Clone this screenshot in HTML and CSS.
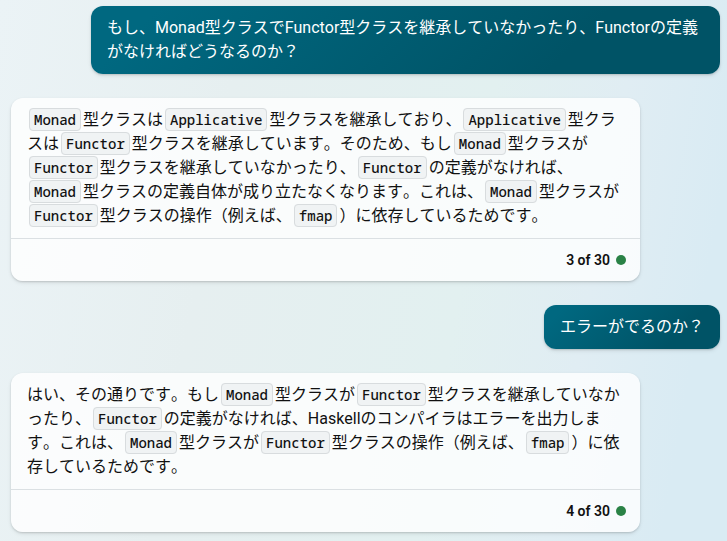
FILE: index.html
```html
<!DOCTYPE html>
<html lang="ja">
<head>
<meta charset="utf-8">
<title>チャット</title>
<link rel="stylesheet" href="styles.css">
</head>
<body>
<main class="chat">
<article class="message user"><p>もし、Monad型クラスでFunctor型クラスを継承していなかったり、Functorの定義がなければどうなるのか？</p></article>
<article class="message bot">
<p class="content"><code>Monad</code>型クラスは<code>Applicative</code>型クラスを継承しており、<code>Applicative</code>型クラスは<code>Functor</code>型クラスを継承しています。そのため、もし<code>Monad</code>型クラスが<code>Functor</code>型クラスを継承していなかったり、<code>Functor</code>の定義がなければ、<code>Monad</code>型クラスの定義自体が成り立たなくなります。これは、<code>Monad</code>型クラスが<code>Functor</code>型クラスの操作（例えば、<code>fmap</code>）に依存しているためです。</p>
<footer class="turns">3 of 30<span class="dot"></span></footer>
</article>
<article class="message user"><p>エラーがでるのか？</p></article>
<article class="message bot">
<p class="content">はい、その通りです。もし<code>Monad</code>型クラスが<code>Functor</code>型クラスを継承していなかったり、<code>Functor</code>の定義がなければ、Haskellのコンパイラはエラーを出力します。これは、<code>Monad</code>型クラスが<code>Functor</code>型クラスの操作（例えば、<code>fmap</code>）に依存しているためです。</p>
<footer class="turns">4 of 30<span class="dot"></span></footer>
</article>
</main>
</body>
</html>
```
FILE: styles.css
```css
* {
  box-sizing: border-box;
}

body {
  margin: 0;
  min-height: 100vh;
  background: linear-gradient(100deg, #ebf3f6 0%, #e6eff0 30%, #e2f0f0 62%, #e0edf3 78%, #d9ebf3 92%, #d9ebf3 100%);
  color: #111;
  font: 16px/24px Roboto, "Noto Sans CJK JP", sans-serif;
  font-kerning: none;
}

p {
  margin: 0;
}

.chat {
  display: flex;
  flex-direction: column;
  gap: 24px;
  padding: 6px 7px 8px 11px;
}

.message {
  max-width: 629px;
  border-radius: 12px;
  box-shadow: 0 1px 2px rgba(0, 0, 0, 0.14), 0 2px 4px rgba(0, 0, 0, 0.08);
}

.user {
  align-self: flex-end;
  padding: 10px 16px;
  background: linear-gradient(135deg, #006880 10%, #005366 75%);
  color: #fff;
}

.bot {
  align-self: flex-start;
  background: rgba(255, 255, 255, 0.8);
}

.content {
  padding: 10px 16px;
}

code {
  margin: 0 2px;
  padding: 1px 4px;
  border: 1px solid #d8dcde;
  border-radius: 4px;
  background: #f0f3f4;
  font: 500 14px/20px "Noto Sans Mono", "Noto Sans Mono CJK JP", "DejaVu Sans Mono", monospace;
}

.turns {
  display: flex;
  align-items: center;
  justify-content: flex-end;
  gap: 6px;
  padding: 9px 14px;
  border-top: 1px solid #dbe0e3;
  font-size: 14px;
  font-weight: 600;
}

.dot {
  width: 10px;
  height: 10px;
  border-radius: 50%;
  background: #2a8246;
}
```
